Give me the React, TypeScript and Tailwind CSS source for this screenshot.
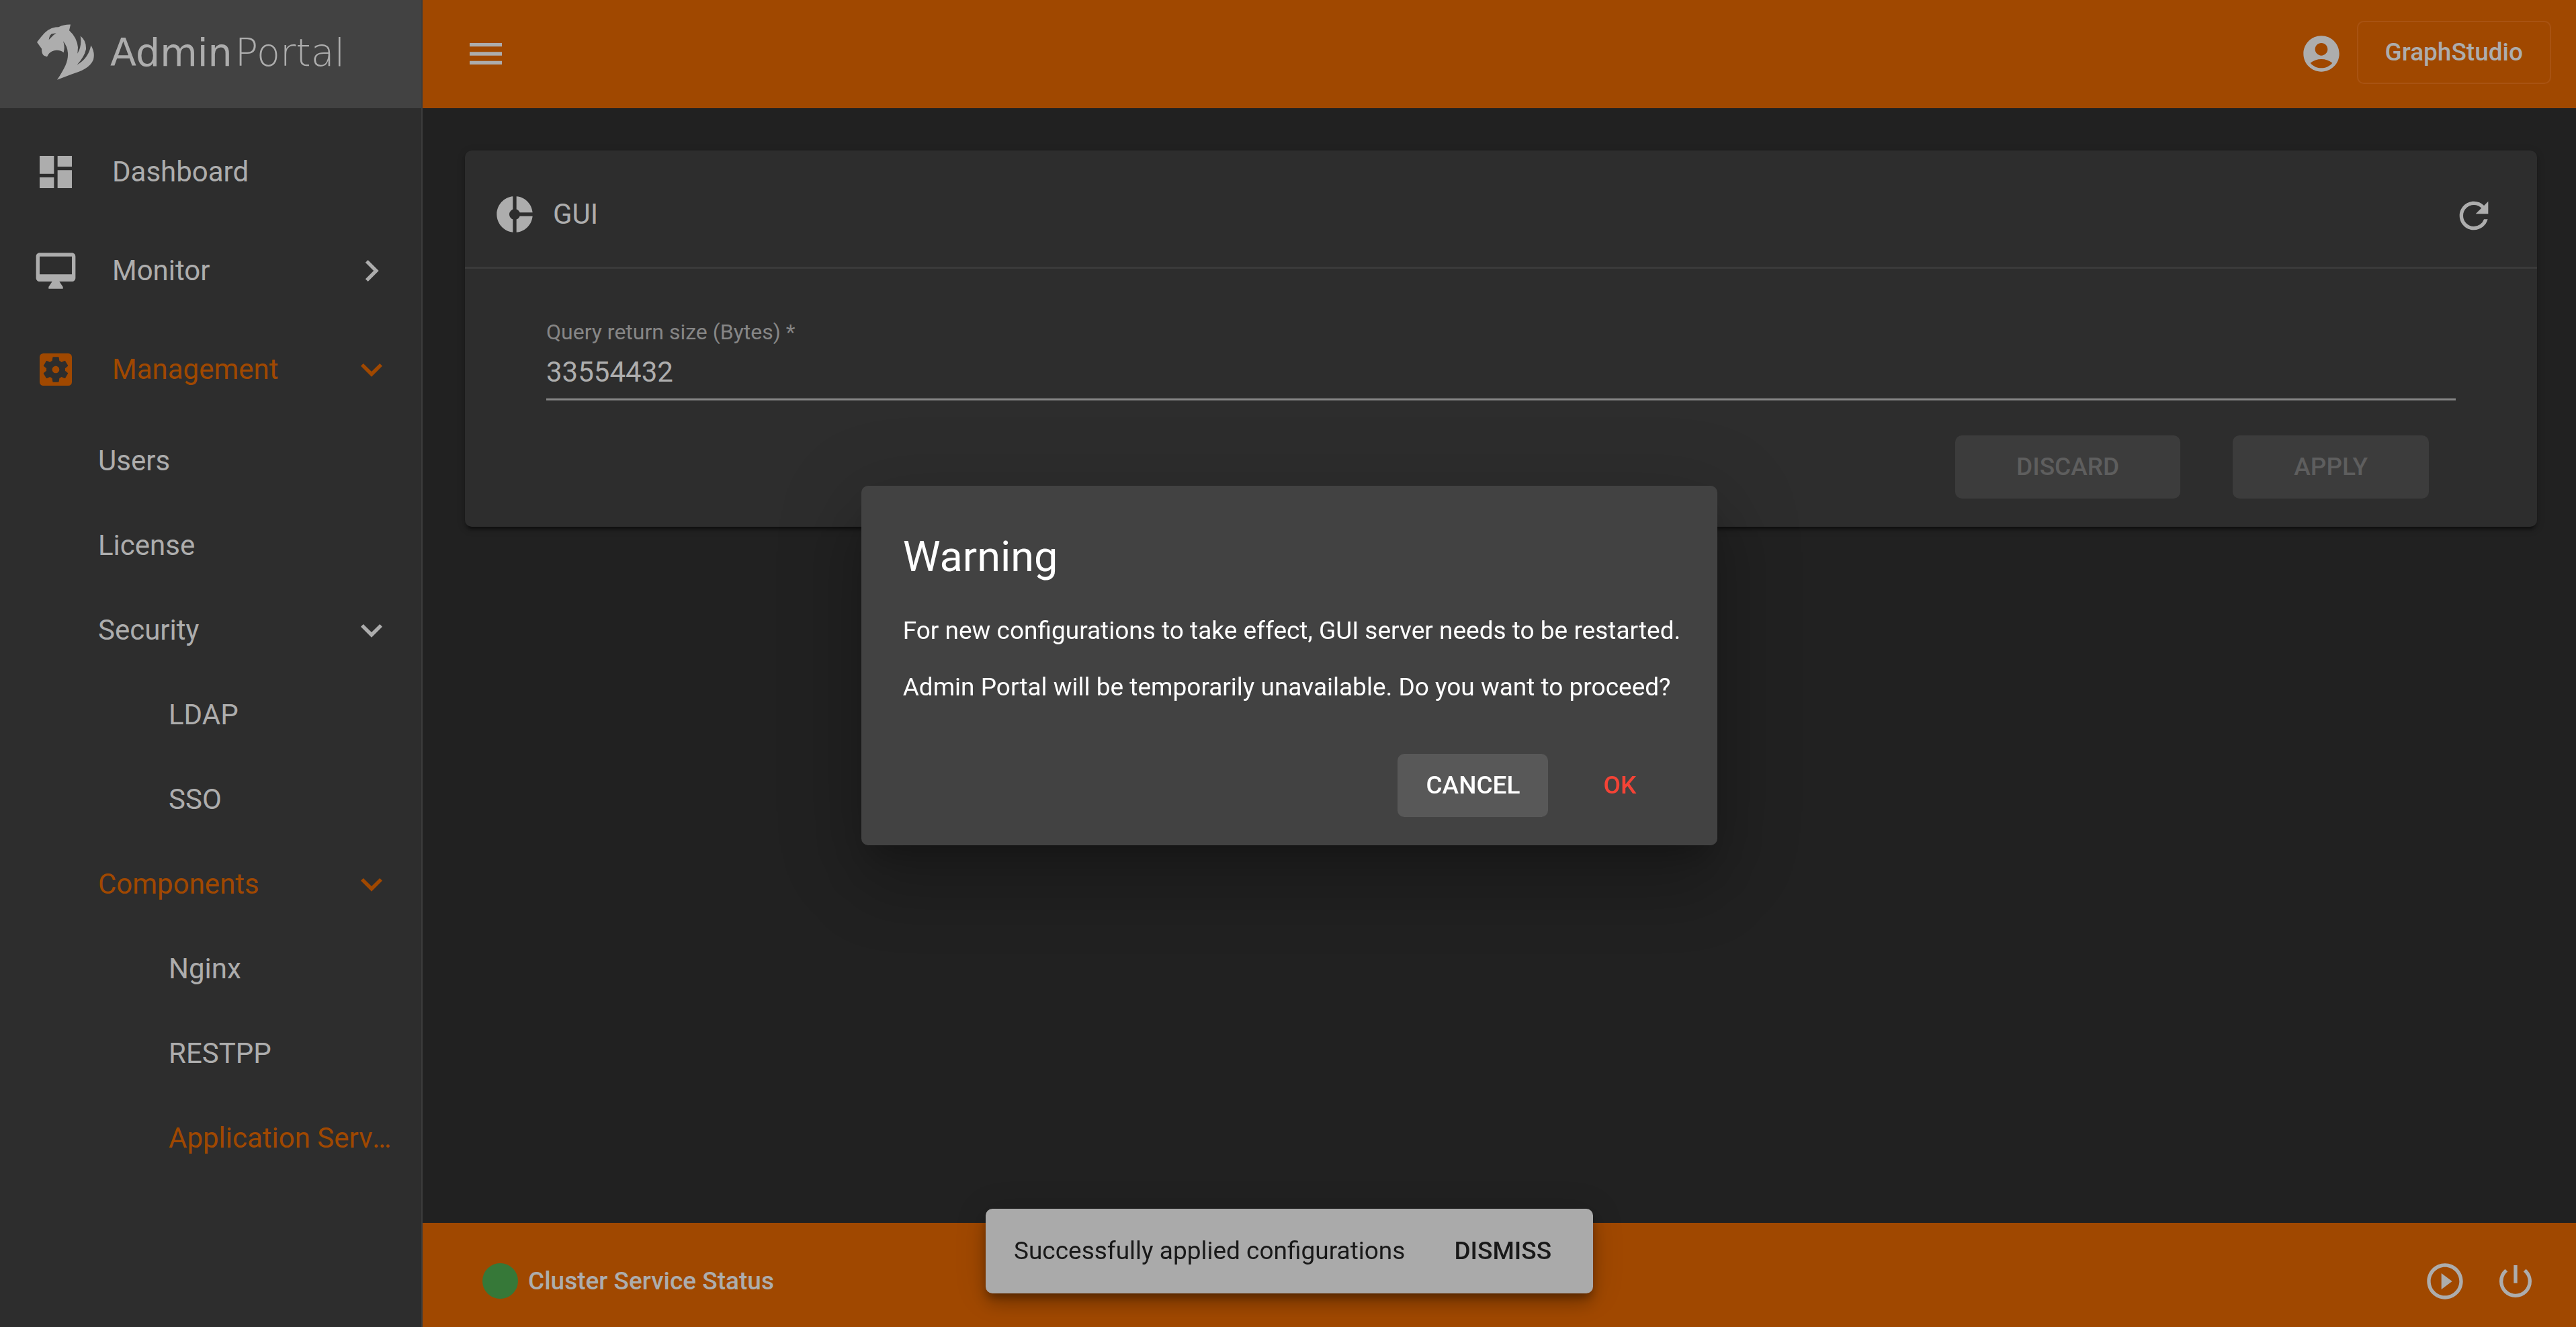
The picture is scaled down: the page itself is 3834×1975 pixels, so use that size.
import type { ReactNode } from "react";
import type { IconType } from "react-icons";
import {
  MdAccountCircle,
  MdChevronRight,
  MdDashboard,
  MdDonutSmall,
  MdExpandMore,
  MdMenu,
  MdPlayCircleOutline,
  MdPowerSettingsNew,
  MdRefresh,
  MdSettingsApplications,
} from "react-icons/md";

function TigerLogo() {
  return (
    <svg viewBox="45 47 255 248" className="h-[83px] w-[85px] shrink-0" fill="currentColor" aria-hidden="true">
      <path
        fillRule="evenodd"
        d="M45 127 L64 103 Q92 65 128 60 L142 59 Q166 47 195 48 L189 74 Q224 106 228 150 L226 178 Q247 143 239 99 Q266 120 264 158 Q258 190 224 228 Q276 198 286 141 Q305 172 297 205 C284 240 240 258 200 270 L135 295 C172 240 185 210 183 175 Q181 145 162 122 Q171 147 164 173 Q146 160 122 164 Q99 170 90 192 L76 187 Q66 180 66 156 Z M98 116 Q100 98 110 90 L131 86 L119 95 Z"
      />
    </svg>
  );
}

function MonitorIcon({ className }: { className?: string }) {
  return (
    <svg viewBox="0 0 24 24" className={className} fill="currentColor" aria-hidden="true">
      <path
        fillRule="evenodd"
        d="M21 2H3c-1.1 0-2 .9-2 2v12c0 1.1.9 2 2 2h7l-2 3v1h8v-1l-2-3h7c1.1 0 2-.9 2-2V4c0-1.1-.9-2-2-2zm0 12H3V4h18v10z"
      />
    </svg>
  );
}

type NavIcon = IconType | typeof MonitorIcon;

function TopItem({ icon: Icon, label, active, arrow: Arrow }: { icon: NavIcon; label: string; active?: boolean; arrow?: IconType }) {
  return (
    <a
      href="#"
      className={`flex h-[147px] items-center pl-[51px] pr-[42px] ${active ? "text-[#a04800]" : "text-[#adadad]"}`}
    >
      <Icon className="size-16 shrink-0" />
      <span className="ml-[52px] flex-1">{label}</span>
      {Arrow && <Arrow className="size-16" />}
    </a>
  );
}

function SubItem({ label, active, arrow: Arrow }: { label: string; active?: boolean; arrow?: IconType }) {
  return (
    <a
      href="#"
      className={`flex h-[126px] items-center pl-[146px] pr-[42px] ${active ? "text-[#a04800]" : "text-[#adadad]"}`}
    >
      <span className="flex-1">{label}</span>
      {Arrow && <Arrow className="size-16" />}
    </a>
  );
}

function LeafItem({ label, active }: { label: string; active?: boolean }) {
  return (
    <a
      href="#"
      className={`flex h-[126px] items-center pl-[251px] pr-[42px] ${active ? "text-[#a04800]" : "text-[#adadad]"}`}
    >
      <span className="min-w-0 truncate">{label}</span>
    </a>
  );
}

function IconButton({ label, children }: { label: string; children: ReactNode }) {
  return (
    <button type="button" aria-label={label} className="flex size-16 items-center justify-center text-[#adadad]">
      {children}
    </button>
  );
}

export default function App() {
  return (
    <div className="flex h-screen overflow-hidden bg-[#212121] font-['Roboto',sans-serif] text-[42px] leading-[48px] text-[#adadad]">
      <aside className="flex w-[629px] shrink-0 flex-col border-r-2 border-[#3c3c3c] bg-[#2d2d2d]">
        <div className="flex h-[161px] shrink-0 items-center bg-[#424242] pb-[6px] pl-[55px]">
          <TigerLogo />
          <div className="ml-[24px] flex gap-1 font-['DejaVu_Sans',sans-serif] text-[57px] leading-[64px]">
            <span>Admin</span>
            <span className="font-extralight">Portal</span>
          </div>
        </div>
        <nav className="pt-[21px]">
          <TopItem icon={MdDashboard} label="Dashboard" />
          <TopItem icon={MonitorIcon} label="Monitor" arrow={MdChevronRight} />
          <TopItem icon={MdSettingsApplications} label="Management" active arrow={MdExpandMore} />
          <SubItem label="Users" />
          <SubItem label="License" />
          <SubItem label="Security" arrow={MdExpandMore} />
          <LeafItem label="LDAP" />
          <LeafItem label="SSO" />
          <SubItem label="Components" active arrow={MdExpandMore} />
          <LeafItem label="Nginx" />
          <LeafItem label="RESTPP" />
          <LeafItem label="Application Server" active />
        </nav>
      </aside>

      <div className="flex min-w-0 flex-1 flex-col">
        <header className="flex h-[161px] shrink-0 items-center bg-[#a04800] pb-[2px] pl-[62px] pr-[37px]">
          <IconButton label="Menu">
            <MdMenu className="size-16" />
          </IconButton>
          <div className="ml-auto flex items-center gap-[21px]">
            <IconButton label="Account">
              <MdAccountCircle className="size-16" />
            </IconButton>
            <button
              type="button"
              className="mb-1 h-[94px] rounded-[10px] border-2 border-[#a85312] px-[40px] text-[37px] font-medium"
            >
              GraphStudio
            </button>
          </div>
        </header>

        <main className="flex-1 pl-[63px] pr-[58px] pt-[63px]">
          <section className="rounded-[10px] bg-[#2d2d2d] shadow-[0_8px_3px_-5px_rgba(0,0,0,0.3),0_5px_5px_0_rgba(0,0,0,0.2),0_3px_13px_0_rgba(0,0,0,0.15)]">
            <div className="flex h-[176px] items-center border-b-3 border-[#3a3a3a] pl-[42px] pr-[62px] pt-[16px]">
              <MdDonutSmall className="size-16" />
              <h2 className="ml-[25px]">GUI</h2>
              <div className="ml-auto pt-1">
                <IconButton label="Refresh">
                  <MdRefresh className="size-16" />
                </IconButton>
              </div>
            </div>
            <form className="px-[121px] pb-[42px] pt-[74px]">
              <label htmlFor="query-size" className="block text-[32px] leading-[40px] text-[#868686]">
                Query return size (Bytes) *
              </label>
              <input
                id="query-size"
                type="text"
                defaultValue="33554432"
                className="mt-[15px] block h-[67px] w-full border-b-3 border-[#868686] bg-transparent pb-[16px] outline-none"
              />
              <div className="mt-[52px] flex justify-end gap-[78px] pr-[40px] text-[37px] font-medium text-[#5e5e5e]">
                <button type="button" disabled className="h-[94px] rounded-[10px] bg-[#3c3c3c] px-[91px]">
                  DISCARD
                </button>
                <button type="button" disabled className="h-[94px] rounded-[10px] bg-[#3c3c3c] px-[91px]">
                  APPLY
                </button>
              </div>
            </form>
          </section>
        </main>

        <footer className="flex h-[155px] shrink-0 items-center bg-[#a04800] pl-[89px] pr-[58px] pt-[18px]">
          <span className="size-[53px] rounded-full bg-[#367838]" />
          <span className="ml-[15px] text-[37px] font-medium">Cluster Service Status</span>
          <div className="ml-auto flex gap-[41px]">
            <IconButton label="Start services">
              <MdPlayCircleOutline className="size-16" />
            </IconButton>
            <IconButton label="Stop services">
              <MdPowerSettingsNew className="size-16" />
            </IconButton>
          </div>
        </footer>
      </div>

      <div className="pointer-events-none fixed inset-0 flex items-end justify-center pb-[50px] pl-1">
        <div
          role="status"
          className="pointer-events-auto flex h-[126px] items-center rounded-[10px] bg-[#aaaaaa] pl-[42px] pr-[62px] text-[37px] text-[#191919] shadow-[0_8px_13px_-3px_rgba(0,0,0,0.3),0_16px_26px_0_rgba(0,0,0,0.2),0_3px_47px_0_rgba(0,0,0,0.15)]"
        >
          <span>Successfully applied configurations</span>
          <button type="button" className="ml-[73px] font-medium">
            DISMISS
          </button>
        </div>
      </div>

      <div className="fixed inset-0 flex items-center justify-center pl-1 pt-1.5">
        <div
          role="dialog"
          aria-modal="true"
          aria-labelledby="dialog-title"
          className="rounded-[10px] bg-[#424242] pb-[42px] pl-[62px] pr-[55px] pt-[64px] text-[37px] text-white shadow-[0_29px_39px_-18px_rgba(0,0,0,0.2),0_63px_100px_8px_rgba(0,0,0,0.14),0_24px_120px_21px_rgba(0,0,0,0.12)]"
        >
          <h1 id="dialog-title" className="text-[63px] leading-[84px]">
            Warning
          </h1>
          <p className="mt-[44px]">For new configurations to take effect, GUI server needs to be restarted.</p>
          <p className="mt-[36px]">Admin Portal will be temporarily unavailable. Do you want to proceed?</p>
          <div className="mt-[75px] flex justify-end pr-[24px] font-medium">
            <button type="button" className="h-[94px] rounded-[10px] bg-[#585858] px-[42px]">
              CANCEL
            </button>
            <button type="button" className="ml-[40px] h-[94px] rounded-[10px] px-[42px] text-[#f44336]">
              OK
            </button>
          </div>
        </div>
      </div>
    </div>
  );
}
